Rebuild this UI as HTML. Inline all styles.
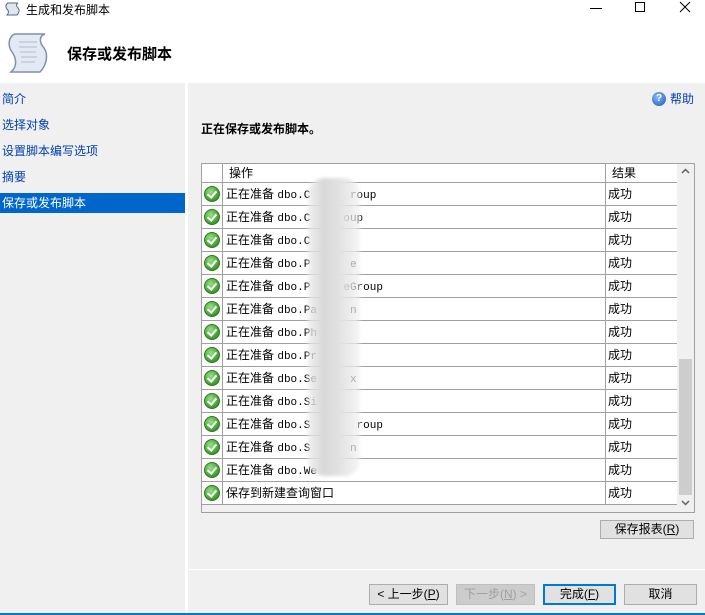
<!DOCTYPE html>
<html><head><meta charset="utf-8"><style>
*{margin:0;padding:0;box-sizing:border-box}
body{width:705px;height:615px;position:relative;background:#f0f0f0;font-family:"Liberation Sans","Noto Sans CJK SC",sans-serif;font-size:12px;color:#000;overflow:hidden}
.abs{position:absolute}
#top{left:0;top:0;width:705px;height:83px;background:#fff}
.nav{position:absolute;left:2px;font-size:12px;color:#0040b0}
.row{position:absolute;left:202px;width:475px;height:23px;border-bottom:1px solid #a0a0a0;background:#fff}
.row .ic{position:absolute;left:2px;top:3px;width:16px;height:16px;border-radius:50%;background:radial-gradient(circle at 40% 35%,#9be08a,#3c9a2c 70%,#2a7a1e);border:1px solid #2f7a22}
.row .ic::after{content:"";position:absolute;left:4px;top:2px;width:4px;height:7px;border-right:2px solid #fff;border-bottom:2px solid #fff;transform:rotate(40deg)}
.row .c1{position:absolute;left:20px;top:0;height:22px;border-left:1px solid #a0a0a0;width:384px;padding-left:3px;line-height:22px;white-space:nowrap}
.row .c2{position:absolute;left:403px;top:0;height:22px;border-left:1px solid #a0a0a0;width:72px;padding-left:2px;line-height:22px}
.mono{font-family:"Liberation Mono","Noto Sans CJK SC",monospace;font-size:11px}
.btn{position:absolute;top:584px;height:21px;border:1px solid #adadad;background:#e1e1e1;text-align:center;line-height:19px;font-size:12px}
</style></head><body>
<div id="top" class="abs"></div>
<svg class="abs" style="left:5px;top:2px" width="16" height="14" viewBox="0 0 16 14"><path d="M3 1h10c-2 1-2 3 0 5 2 2 1 5-1 7H2c2-2 2-4 0-6-2-2-1-5 1-6z" fill="#dfe6f2" stroke="#5a6a8a"/></svg>
<div class="abs" style="left:26px;top:1px;font-size:12px">生成和发布脚本</div>
<div class="abs" style="left:590px;top:8px;width:12px;border-top:1px solid #000"></div>
<div class="abs" style="left:635px;top:2px;width:10px;height:10px;border:1px solid #000"></div>
<svg class="abs" style="left:679px;top:1px" width="12" height="12"><path d="M1 1L11 11M11 1L1 11" stroke="#000"/></svg>
<svg class="abs" style="left:7px;top:32px" width="42" height="44" viewBox="0 0 42 44"><path d="M8 2h30c-6 2-6 8-1 14 5 7 2 18-4 24H4c6-5 6-13 1-20C0 13 2 4 8 2z" fill="#e4eaf4" stroke="#7f8fb0" stroke-width="1.5"/><path d="M12 10h18M12 15h18M13 20h16M14 25h16M14 30h14" stroke="#b0bcd0"/></svg>
<div class="abs" style="left:67px;top:43px;font-size:15px;font-weight:bold">保存或发布脚本</div>
<div class="abs" style="left:0;top:83px;width:185px;height:532px;background:#f0f0f0"></div>
<div class="abs" style="left:185px;top:83px;width:3px;height:532px;background:#fff"></div>
<div class="nav" style="top:90px">简介</div>
<div class="nav" style="top:116px">选择对象</div>
<div class="nav" style="top:142px">设置脚本编写选项</div>
<div class="nav" style="top:168px">摘要</div>
<div class="abs" style="left:0;top:193px;width:185px;height:20px;background:#0066cc;color:#fff;padding-left:2px;line-height:20px">保存或发布脚本</div>
<div class="abs" style="left:652px;top:92px;width:14px;height:14px;border-radius:50%;background:radial-gradient(circle at 40% 35%,#8ab8f0,#1a56c0);color:#fff;font-size:10px;font-weight:bold;text-align:center;line-height:14px">?</div>
<div class="abs" style="left:670px;top:90px;color:#0040b0">帮助</div>
<div class="abs" style="left:201px;top:120px;font-weight:bold;font-size:12px">正在保存或发布脚本。</div>
<div class="abs" style="left:201px;top:163px;width:494px;height:350px;border:1px solid #a0a0a0;background:#f0f0f0"></div>
<div class="row" style="top:164px;height:19px"><div class="c1" style="height:18px;line-height:18px;padding-left:6px">操作</div><div class="c2" style="height:18px;line-height:18px;padding-left:6px">结果</div></div>
<div class="abs" style="left:677px;top:164px;width:17px;height:348px;background:#f0f0f0"></div>
<svg class="abs" style="left:681px;top:168px" width="9" height="6"><path d="M1 5L4.5 1.5L8 5" stroke="#606060" stroke-width="1.5" fill="none"/></svg>
<div class="abs" style="left:679px;top:359px;width:13px;height:136px;background:#cdcdcd"></div>
<svg class="abs" style="left:681px;top:500px" width="9" height="6"><path d="M1 1L4.5 4.5L8 1" stroke="#606060" stroke-width="1.5" fill="none"/></svg>
<div class="row" style="top:183px"><div class="ic"></div><div class="c1">正在准备 <span class="mono">dbo.C&nbsp;&nbsp;&nbsp;&nbsp;&nbsp;&nbsp;roup</span></div><div class="c2">成功</div></div>
<div class="row" style="top:206px"><div class="ic"></div><div class="c1">正在准备 <span class="mono">dbo.C&nbsp;&nbsp;&nbsp;&nbsp;&nbsp;oup</span></div><div class="c2">成功</div></div>
<div class="row" style="top:229px"><div class="ic"></div><div class="c1">正在准备 <span class="mono">dbo.C</span></div><div class="c2">成功</div></div>
<div class="row" style="top:252px"><div class="ic"></div><div class="c1">正在准备 <span class="mono">dbo.P&nbsp;&nbsp;&nbsp;&nbsp;&nbsp;&nbsp;e</span></div><div class="c2">成功</div></div>
<div class="row" style="top:275px"><div class="ic"></div><div class="c1">正在准备 <span class="mono">dbo.P&nbsp;&nbsp;&nbsp;&nbsp;&nbsp;eGroup</span></div><div class="c2">成功</div></div>
<div class="row" style="top:298px"><div class="ic"></div><div class="c1">正在准备 <span class="mono">dbo.Pa&nbsp;&nbsp;&nbsp;&nbsp;&nbsp;n</span></div><div class="c2">成功</div></div>
<div class="row" style="top:321px"><div class="ic"></div><div class="c1">正在准备 <span class="mono">dbo.Ph</span></div><div class="c2">成功</div></div>
<div class="row" style="top:344px"><div class="ic"></div><div class="c1">正在准备 <span class="mono">dbo.Pr</span></div><div class="c2">成功</div></div>
<div class="row" style="top:367px"><div class="ic"></div><div class="c1">正在准备 <span class="mono">dbo.Se&nbsp;&nbsp;&nbsp;&nbsp;&nbsp;x</span></div><div class="c2">成功</div></div>
<div class="row" style="top:390px"><div class="ic"></div><div class="c1">正在准备 <span class="mono">dbo.Si</span></div><div class="c2">成功</div></div>
<div class="row" style="top:413px"><div class="ic"></div><div class="c1">正在准备 <span class="mono">dbo.S&nbsp;&nbsp;&nbsp;&nbsp;&nbsp;&nbsp;&nbsp;roup</span></div><div class="c2">成功</div></div>
<div class="row" style="top:436px"><div class="ic"></div><div class="c1">正在准备 <span class="mono">dbo.S&nbsp;&nbsp;&nbsp;&nbsp;&nbsp;&nbsp;n</span></div><div class="c2">成功</div></div>
<div class="row" style="top:459px"><div class="ic"></div><div class="c1">正在准备 <span class="mono">dbo.We</span></div><div class="c2">成功</div></div>
<div class="row" style="top:482px"><div class="ic"></div><div class="c1">保存到新建查询窗口</div><div class="c2">成功</div></div>
<div class="abs" style="left:308px;top:178px;width:52px;height:298px;background:linear-gradient(90deg,rgba(235,235,235,.7),#d8d8d8 30%,#e2e2e2 60%,rgba(240,240,240,.6));filter:blur(1.5px);border-radius:16px"></div>
<div class="btn" style="left:600px;top:520px;width:94px;height:19px;line-height:17px">保存报表(<u>R</u>)</div>
<div class="abs" style="left:188px;top:569px;width:517px;height:1px;background:#fff"></div>
<div class="btn" style="left:369px;width:79px">&lt; 上一步(<u>P</u>)</div>
<div class="btn" style="left:456px;width:79px;color:#a0a0a0;background:#ccc;border-color:#bfbfbf">下一步(<u>N</u>) &gt;</div>
<div class="btn" style="left:543px;width:73px;border:2px solid #0078d7;line-height:17px">完成(<u>F</u>)</div>
<div class="btn" style="left:624px;width:73px">取消</div>
<div class="abs" style="left:0;top:613px;width:705px;height:2px;background:#0078d7"></div>
</body></html>
